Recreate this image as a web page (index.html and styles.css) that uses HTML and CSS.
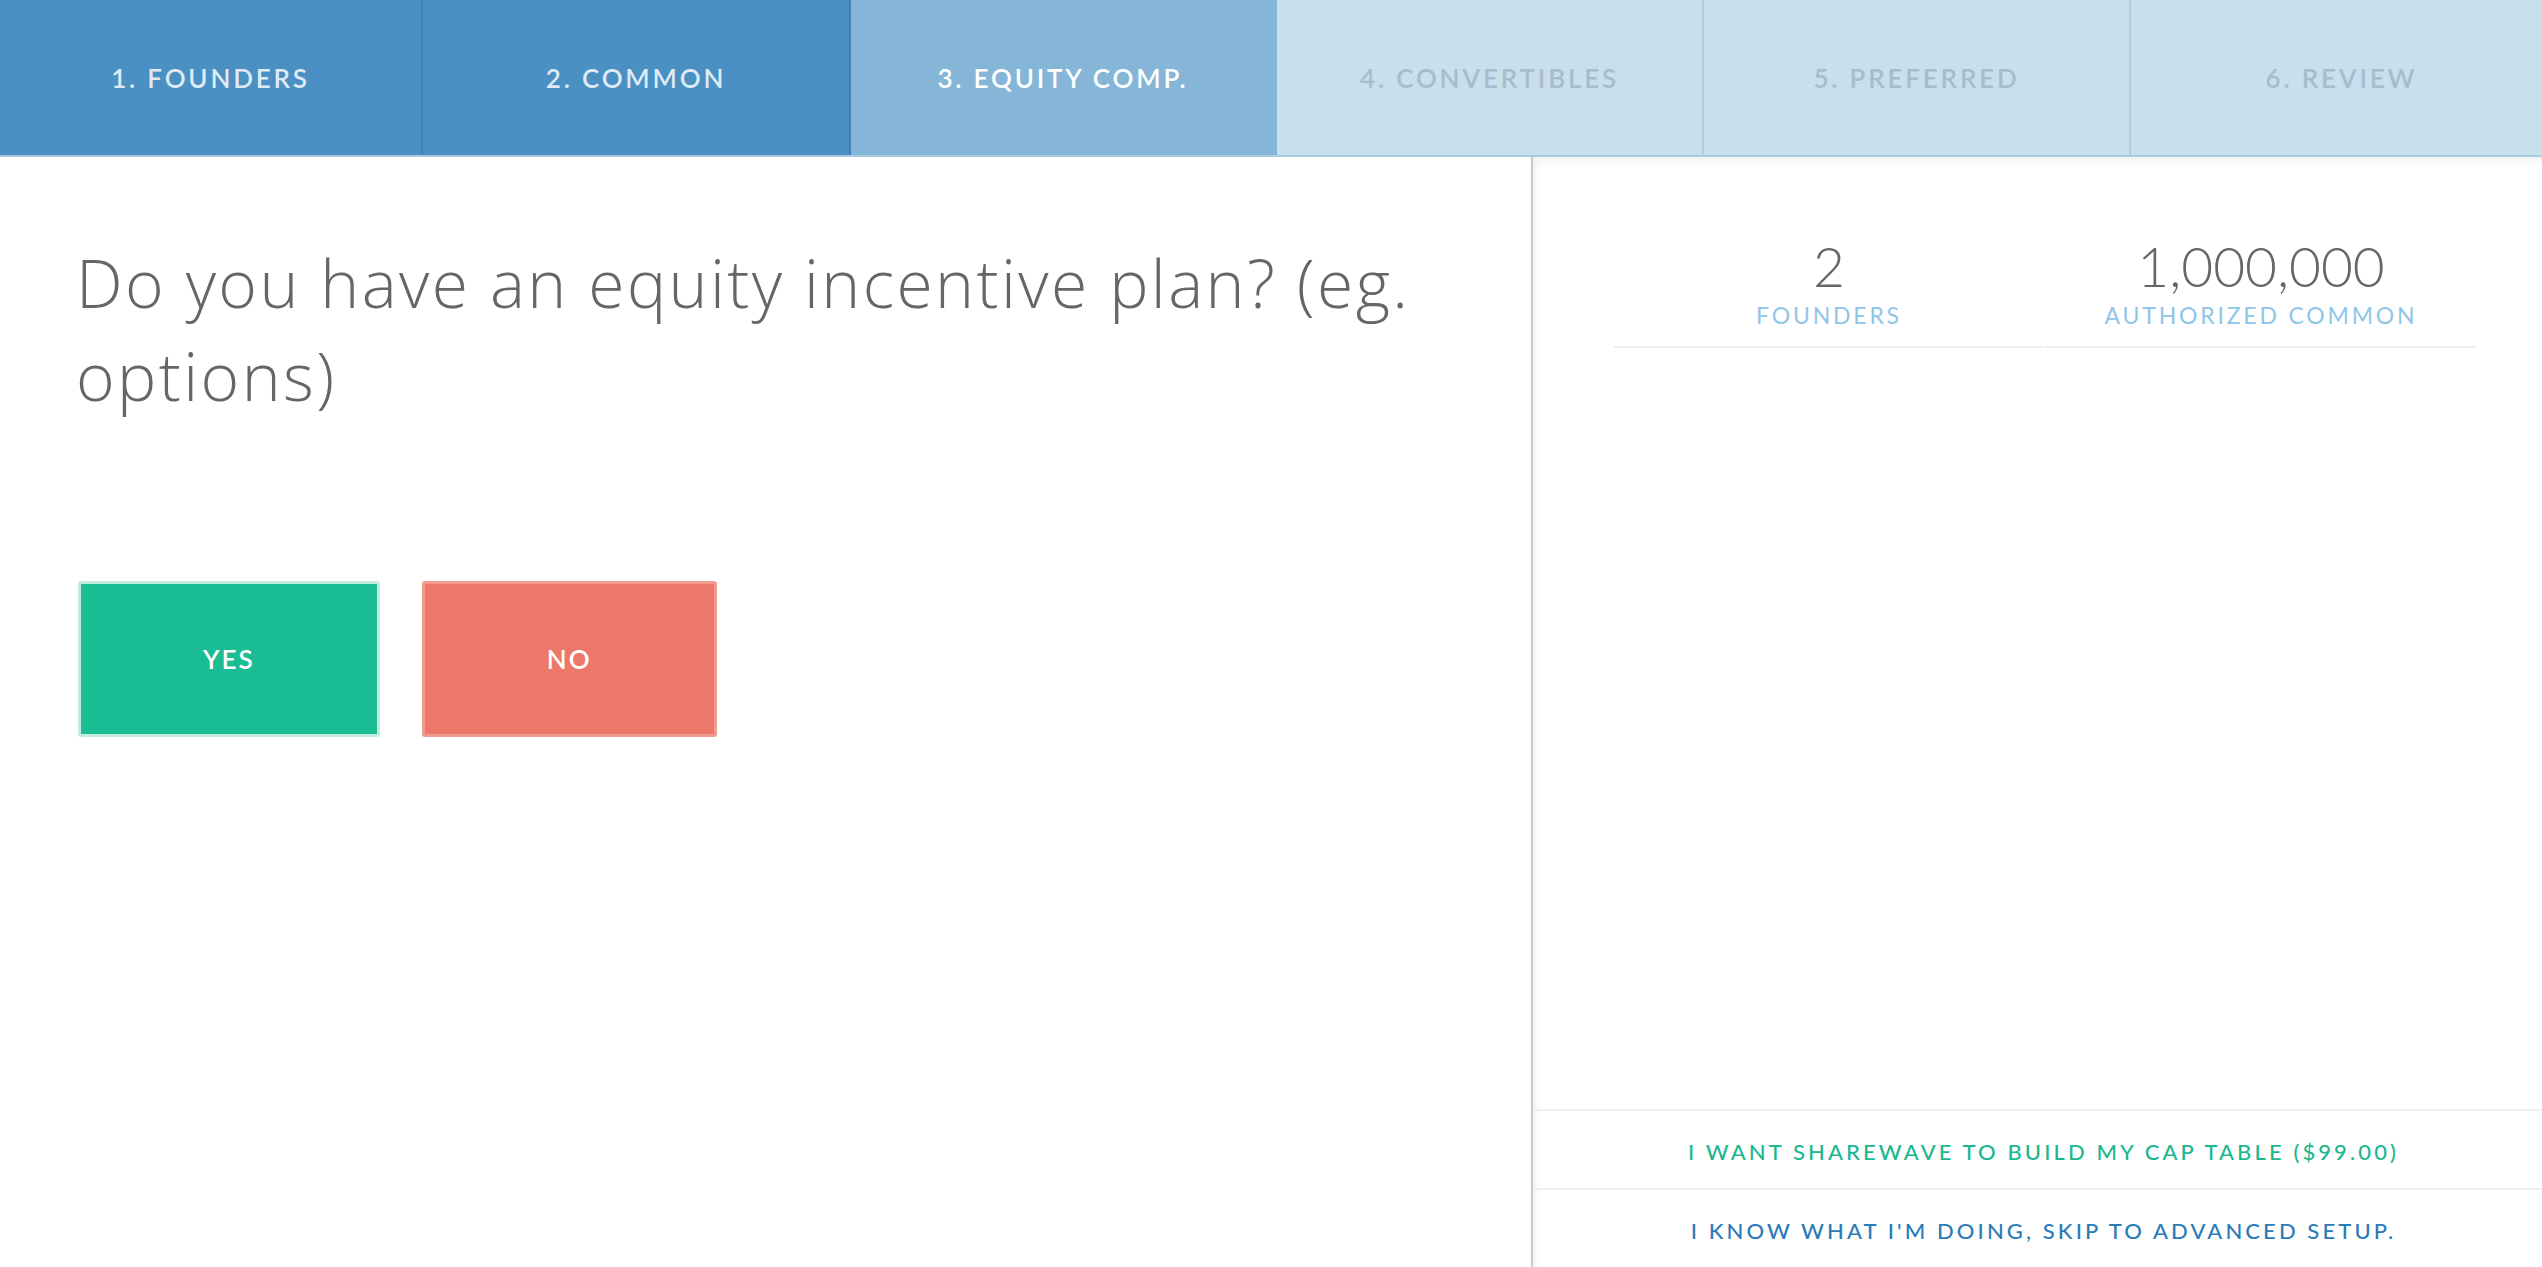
FILE: index.html
```html
<!DOCTYPE html>
<html lang="en">
<head>
<meta charset="utf-8">
<title>Cap table setup</title>
<link rel="stylesheet" href="styles.css">
</head>
<body>
<div class="app">
  <nav class="steps">
    <div class="step done">1. FOUNDERS</div>
    <div class="step done">2. COMMON</div>
    <div class="step current">3. EQUITY COMP.</div>
    <div class="step todo">4. CONVERTIBLES</div>
    <div class="step todo">5. PREFERRED</div>
    <div class="step todo last">6. REVIEW</div>
  </nav>
  <main class="main">
    <section class="question">
      <h1 class="question-title">Do you have an equity incentive plan? (eg. options)</h1>
      <div class="answers">
        <button class="answer yes">YES</button>
        <button class="answer no">NO</button>
      </div>
    </section>
    <aside class="summary">
      <div class="stats">
        <div class="stat">
          <div class="stat-value">2</div>
          <div class="stat-label">FOUNDERS</div>
        </div>
        <div class="stat">
          <div class="stat-value">1,000,000</div>
          <div class="stat-label">AUTHORIZED COMMON</div>
        </div>
      </div>
      <div class="links">
        <a class="link-row green" href="#">I WANT SHAREWAVE TO BUILD MY CAP TABLE ($99.00)</a>
        <a class="link-row blue" href="#">I KNOW WHAT I'M DOING, SKIP TO ADVANCED SETUP.</a>
      </div>
    </aside>
  </main>
</div>
</body>
</html>
```

FILE: styles.css
```css
* { box-sizing: border-box; }
html, body { margin: 0; padding: 0; }
body {
  font-family: Lato, "Open Sans", "Liberation Sans", sans-serif;
  background: #ffffff;
  width: 2542px;
  height: 1267px;
  overflow: hidden;
}
.app {
  display: flex;
  flex-direction: column;
  height: 1267px;
}
.steps {
  display: grid;
  grid-template-columns: 423px 428px 426px 427px 427px 1fr;
  height: 157px;
  border-bottom: 2px solid #a9cbe0;
  flex: none;
}
.step {
  display: flex;
  align-items: center;
  justify-content: center;
  font-size: 26px;
  letter-spacing: 2.8px;
  font-weight: 600;
  border-right: 2px solid transparent;
}
.step.done {
  background: #4a90c3;
  color: #dfeaf4;
  border-right-color: #4183b7;
}
.step.current {
  background: #85b6d7;
  color: #ffffff;
  border-right-color: #85b6d7;
}
.step.todo {
  background: #c8dfed;
  color: #a7bdcc;
  border-right-color: #b3cddd;
}
.step.last {
  border-right: none;
  padding-left: 10px;
}
.main {
  flex: 1;
  display: flex;
  min-height: 0;
}
.question {
  width: 1533px;
  flex: none;
  border-right: 2px solid #c9c9c9;
  padding: 79px 60px 0 76px;
}
.question-title {
  margin: 0;
  font-family: "Open Sans", Lato, "Liberation Sans", sans-serif;
  font-weight: 300;
  font-size: 66px;
  line-height: 93px;
  color: #666666;
  letter-spacing: 2.4px;
}
.answers {
  display: flex;
  gap: 42px;
  margin-top: 159px;
  margin-left: 2px;
}
.answer {
  font-family: Lato, "Open Sans", "Liberation Sans", sans-serif;
  font-size: 26px;
  letter-spacing: 2px;
  font-weight: 600;
  color: #ffffff;
  height: 156px;
  padding: 0 122px;
  border-radius: 3px;
  border: 3px solid;
  cursor: pointer;
}
.answer.yes {
  background: #1abc94;
  border-color: #c3ebe0;
}
.answer.no {
  background: #ed786a;
  border-color: #f19a90;
}
.summary {
  flex: 1;
  display: flex;
  flex-direction: column;
  box-shadow: inset 5px 6px 9px -3px rgba(0, 0, 0, 0.07);
  background: #ffffff;
}
.stats {
  display: grid;
  grid-template-columns: 430px 430px;
  column-gap: 2px;
  margin: 77px 0 0 81px;
}
.stat {
  text-align: center;
  padding-bottom: 18px;
  border-bottom: 2px solid #efefef;
}
.stat-value {
  font-weight: 300;
  font-size: 55px;
  line-height: 65px;
  color: #666666;
}
.stat-label {
  margin-top: 3px;
  font-size: 23px;
  line-height: 26px;
  letter-spacing: 2.8px;
  color: #8fc6e8;
}
.links {
  margin-top: auto;
  display: flex;
  flex-direction: column;
}
.link-row {
  display: flex;
  align-items: center;
  justify-content: center;
  height: 79px;
  padding-top: 4px;
  padding-left: 12px;
  border-top: 2px solid #efefef;
  font-size: 22px;
  font-weight: 500;
  letter-spacing: 3.1px;
  text-decoration: none;
}
.link-row.green { color: #1bb88f; }
.link-row.blue { color: #2a7bb8; }
```
